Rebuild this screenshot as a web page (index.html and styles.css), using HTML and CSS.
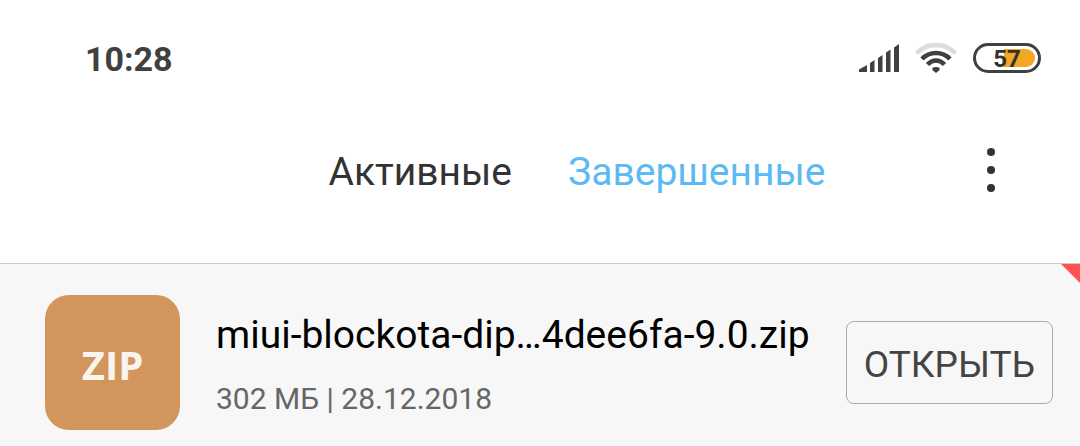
FILE: index.html
```html
<!DOCTYPE html>
<html lang="ru">
<head>
<meta charset="utf-8">
<meta name="viewport" content="width=device-width, initial-scale=1">
<title>Загрузки</title>
<link rel="stylesheet" href="styles.css">
</head>
<body>
<header class="status-bar">
  <time class="clock">10:28</time>
  <div class="indicators">
    <svg class="signal" viewBox="0 0 40 30" aria-hidden="true">
      <path d="M0 29v-2.500l8-4.500v7zM11 29v-9l4.500-3v12zM19 29V15l4.500-3v17zM27 29V9.500l4.500-3V29zM35 29V4.500L40 1v28z"/>
    </svg>
    <svg class="wifi" viewBox="0 0 42 30" aria-hidden="true">
      <path class="wifi-off" d="M1.500 10.500C12-1 30-1 40.500 10.500"/>
      <path class="wifi-on" d="M7 16C14.500 8 27.500 8 35 16M12.500 21.500C17.500 16 24.500 16 29.500 21.500"/>
      <path class="wifi-dot" d="M17 26Q17.500 24 21 24T25 26Q24 28 21 30Q18 28 17 26z"/>
    </svg>
    <div class="battery"><span class="battery-level"></span><span class="battery-text">57</span></div>
  </div>
</header>
<nav class="tabs">
  <a class="tab" href="#active">Активные</a>
  <a class="tab tab-current" href="#finished" aria-current="page">Завершенные</a>
  <button class="menu" type="button" aria-label="Меню">
    <span class="dot"></span><span class="dot"></span><span class="dot"></span>
  </button>
</nav>
<main class="downloads">
  <article class="download">
    <div class="file-icon">ZIP</div>
    <div class="file-info">
      <h1 class="file-name">miui-blockota-dip…4dee6fa-9.0.zip</h1>
      <p class="file-meta">302 МБ | 28.12.2018</p>
    </div>
    <button class="open" type="button">ОТКРЫТЬ</button>
    <span class="corner"></span>
  </article>
</main>
</body>
</html>
```
FILE: styles.css
```css
* {
  box-sizing: border-box;
}

body {
  margin: 0;
  min-height: 100vh;
  display: flex;
  flex-direction: column;
  background: #fff;
  color: #333;
  font-family: Roboto, "Noto Sans", sans-serif;
}

.status-bar {
  display: flex;
  justify-content: space-between;
  align-items: center;
  padding: 37px 39px 0 85px;
}

.clock {
  padding-top: 2px;
  color: #404040;
  font-size: 34px;
  line-height: 40px;
  font-weight: 700;
}

.indicators {
  display: flex;
  align-items: center;
  gap: 16px;
}

.signal,
.wifi {
  height: 30px;
  fill: #404040;
}

.signal {
  width: 40px;
}

.wifi {
  width: 42px;
}

.wifi-off,
.wifi-on {
  fill: none;
  stroke: #404040;
  stroke-width: 4.500;
}

.wifi-off {
  stroke: #dcdcdc;
}

.battery {
  position: relative;
  width: 68px;
  height: 30px;
  border: 3px solid #404040;
  border-radius: 15px;
  text-align: center;
}

.battery-level {
  position: absolute;
  top: 3px;
  right: 3px;
  bottom: 3px;
  width: 31px;
  border-radius: 0 9px 9px 0;
  background: #f5a623;
}

.battery-text {
  position: relative;
  display: block;
  color: #333;
  font-size: 24px;
  line-height: 26px;
  font-weight: 700;
}

.tabs {
  display: grid;
  grid-template-columns: 1fr auto auto 1fr;
  column-gap: 56px;
  align-items: center;
  padding: 0 74px 0 148px;
  height: 185px;
  border-bottom: 1px solid #ccc;
}

.tab {
  grid-column: 2;
  padding-top: 2px;
  color: #333;
  font-size: 39px;
  line-height: 48px;
  text-decoration: none;
}

.tab-current {
  grid-column: 3;
  color: #5cbaf3;
}

.menu {
  grid-column: 4;
  justify-self: end;
  display: flex;
  flex-direction: column;
  align-items: center;
  gap: 10px;
  width: 30px;
  padding: 0 0 2px;
  border: 0;
  background: none;
}

.dot {
  width: 8px;
  height: 8px;
  border-radius: 50%;
  background: #333;
}

.downloads {
  flex: 1;
  background: #f7f7f7;
}

.download {
  position: relative;
  display: flex;
  align-items: center;
  gap: 36px;
  padding: 31px 27px 16px 45px;
}

.file-icon {
  display: grid;
  place-items: center;
  flex: none;
  width: 135px;
  height: 135px;
  padding-top: 5px;
  border-radius: 24px;
  background: #d2965c;
  color: #f8f4f0;
  font: 700 40px/48px "Open Sans", sans-serif;
}

.file-info {
  flex: 1;
  min-width: 0;
  padding-top: 2px;
}

.file-name {
  margin: 0;
  color: #000;
  font-size: 39px;
  line-height: 48px;
  font-weight: 400;
  white-space: nowrap;
}

.file-meta {
  margin: 22px 0 0;
  color: #666;
  font-size: 30px;
  line-height: 36px;
}

.open {
  flex: none;
  height: 83px;
  padding: 4px 17px 0;
  border: 1px solid #aaa;
  border-radius: 8px;
  background: transparent;
  color: #444;
  font-family: inherit;
  font-size: 37px;
  line-height: 48px;
}

.corner {
  position: absolute;
  top: 0;
  right: 0;
  width: 19px;
  height: 19px;
  background: #ff5252;
  clip-path: polygon(0 0, 100% 0, 100% 100%);
}
```
